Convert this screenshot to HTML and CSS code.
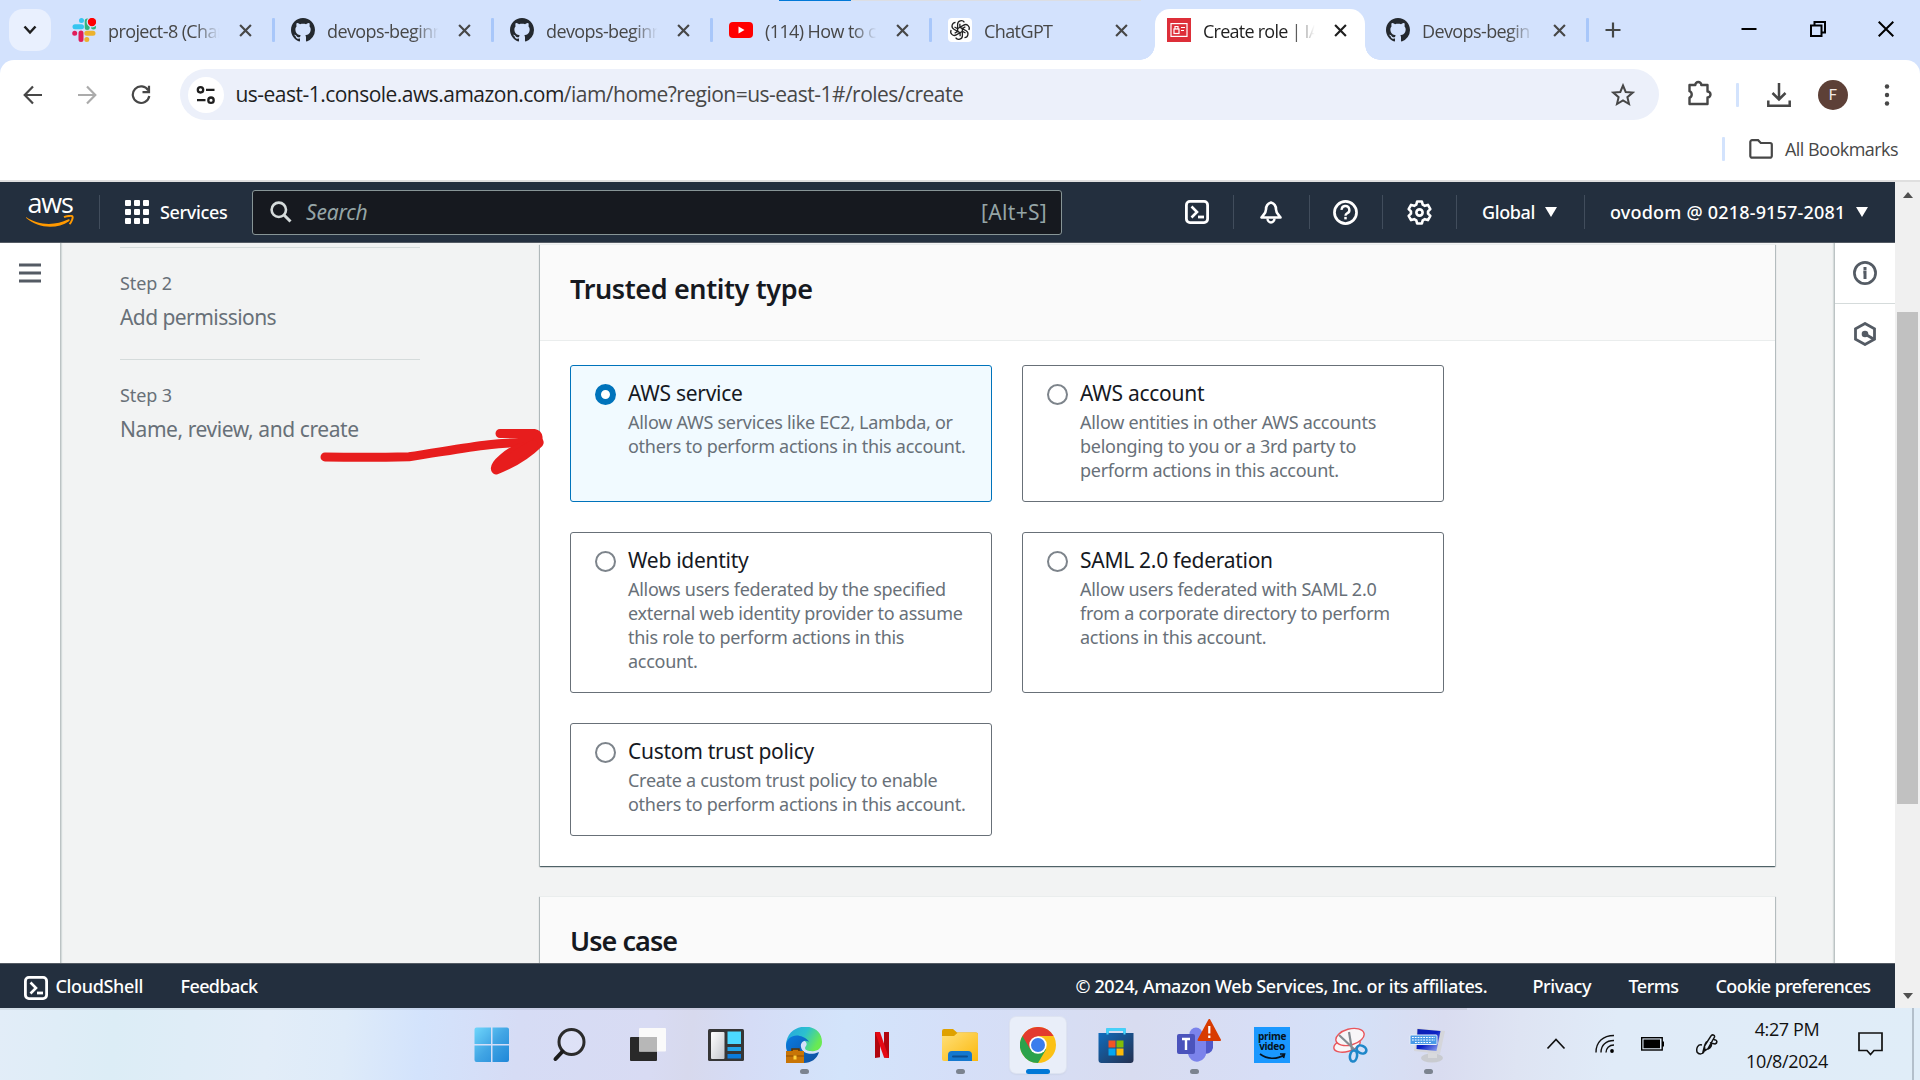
FILE: index.html
```html
<!DOCTYPE html>
<html lang="en">
<head>
<meta charset="utf-8">
<title>Create role | IAM</title>
<link rel="stylesheet" href="styles.css">
</head>
<body>
<svg class="defs" width="0" height="0">
  <defs>
    <symbol id="github" viewBox="0 0 16 16"><path fill="#24292f" d="M8 0C3.58 0 0 3.58 0 8c0 3.54 2.29 6.53 5.47 7.59.4.07.55-.17.55-.38 0-.19-.01-.82-.01-1.49-2.01.37-2.53-.49-2.69-.94-.09-.23-.48-.94-.82-1.13-.28-.15-.68-.52-.01-.53.63-.01 1.08.58 1.23.82.72 1.21 1.87.87 2.33.66.07-.52.28-.87.51-1.07-1.78-.2-3.64-.89-3.64-3.95 0-.87.31-1.59.82-2.15-.08-.2-.36-1.02.08-2.12 0 0 .67-.21 2.2.82.64-.18 1.32-.27 2-.27s1.36.09 2 .27c1.53-1.04 2.2-.82 2.2-.82.44 1.1.16 1.92.08 2.12.51.56.82 1.27.82 2.15 0 3.07-1.87 3.75-3.65 3.95.29.25.54.73.54 1.48 0 1.07-.01 1.93-.01 2.2 0 .21.15.46.55.38A8.01 8.01 0 0 0 16 8c0-4.42-3.58-8-8-8z"/></symbol>
    <symbol id="close" viewBox="0 0 12 12"><path d="M1 1l10 10M11 1L1 11" fill="none" stroke="currentColor" stroke-width="2"/></symbol>
    <symbol id="shell" viewBox="0 0 24 24"><rect x="1.4" y="1.4" width="21.2" height="21.2" rx="3.5" fill="none" stroke="#fff" stroke-width="2.8"/><path d="M6.5 6.500l5.500 5.500-5.500 5.500" fill="none" stroke="#fff" stroke-width="2.600"/><path d="M13 17h6" stroke="#fff" stroke-width="2.800"/></symbol>
    <linearGradient id="win" x1="0" y1="0" x2="1" y2="1"><stop offset="0" stop-color="#6fd6fb"/><stop offset=".5" stop-color="#41a5e4"/><stop offset="1" stop-color="#1f87d8"/></linearGradient>
    <linearGradient id="edgeTop" x1="0" y1="0" x2="1" y2=".4"><stop offset="0" stop-color="#25a4e0"/><stop offset=".55" stop-color="#2cc0cf"/><stop offset="1" stop-color="#69ea53"/></linearGradient>
    <linearGradient id="edgeBody" x1="0" y1="0" x2="1" y2="1"><stop offset="0" stop-color="#0a7be0"/><stop offset="1" stop-color="#0f4f9c"/></linearGradient>
    <linearGradient id="folder" x1="0" y1="0" x2="1" y2="1"><stop offset="0" stop-color="#ffe07a"/><stop offset="1" stop-color="#fbb80c"/></linearGradient>
    <linearGradient id="store" x1="0" y1="0" x2="1" y2="1"><stop offset="0" stop-color="#0f6cbd"/><stop offset="1" stop-color="#25304f"/></linearGradient>
    <linearGradient id="silver" x1="0" y1="0" x2="1" y2="1"><stop offset="0" stop-color="#fff"/><stop offset="1" stop-color="#c4c7cc"/></linearGradient>
    <linearGradient id="screen" x1="0" y1="0" x2="1" y2="1"><stop offset="0" stop-color="#0c1fb0"/><stop offset=".5" stop-color="#0a20c4"/><stop offset="1" stop-color="#9fb2f4"/></linearGradient>
  </defs>
</svg>

<header class="tabstrip">
  <button class="tab-search"><svg width="14" height="10" viewBox="0 0 14 10"><path d="M1.500 1.500L7 7.500l5.500-6" fill="none" stroke="#1f1f1f" stroke-width="2.500"/></svg></button>
  <div class="tab">
    <svg class="fav" viewBox="0 0 24 24"><g stroke-width="5" stroke-linecap="round"><path d="M9.500 2.500v0M3 8.800h6.500" stroke="#36c5f0"/><path d="M15.200 3v6.500M21.500 9v0" stroke="#2eb67d"/><path d="M14.800 15.200H21M14.800 21.500v0" stroke="#ecb22e"/><path d="M9 15v6.500M2.700 15.200v0" stroke="#e01e5a"/></g><circle cx="20" cy="4" r="4.800" fill="#f00" stroke="#d3e2fd" stroke-width="1.200"/></svg>
    <span class="tab-title">project-8 (Chan</span><svg class="x"><use href="#close"/></svg><i class="sep"></i>
  </div>
  <div class="tab"><svg class="fav"><use href="#github"/></svg><span class="tab-title">devops-beginn</span><svg class="x"><use href="#close"/></svg><i class="sep"></i></div>
  <div class="tab"><svg class="fav"><use href="#github"/></svg><span class="tab-title">devops-beginn</span><svg class="x"><use href="#close"/></svg><i class="sep"></i></div>
  <div class="tab"><svg class="fav" viewBox="0 0 24 24"><rect y="4" width="24" height="16" rx="4" fill="#f00"/><path d="M9.500 8.500v7l6-3.500z" fill="#fff"/></svg><span class="tab-title">(114) How to c</span><svg class="x"><use href="#close"/></svg><i class="sep"></i></div>
  <div class="tab"><svg class="fav" viewBox="0 0 24 24"><rect width="24" height="24" rx="4" fill="#fff"/><g fill="none" stroke="#222" stroke-width="1.300"><path id="petal" d="M12 9.300L9.600 10.700V6.300a3.700 3.700 0 0 1 6.800-2M9.600 10.700L6.500 9"/><use href="#petal" transform="rotate(60 12 12)"/><use href="#petal" transform="rotate(120 12 12)"/><use href="#petal" transform="rotate(180 12 12)"/><use href="#petal" transform="rotate(240 12 12)"/><use href="#petal" transform="rotate(300 12 12)"/></g></svg><span class="tab-title">ChatGPT</span><svg class="x"><use href="#close"/></svg></div>
  <div class="tab active"><svg class="fav" viewBox="0 0 24 24"><rect width="24" height="24" fill="#dd2f39"/><g fill="none" stroke="#fff" stroke-width="1.200"><rect x="4" y="5.600" width="16" height="12.800"/><rect x="7" y="11" width="5" height="4.500"/><path d="M8 11V8.500h3V11M14 9.500h4M14 12.500h3"/></g></svg><span class="tab-title">Create role | IA</span><svg class="x"><use href="#close"/></svg></div>
  <div class="tab"><svg class="fav"><use href="#github"/></svg><span class="tab-title">Devops-begin</span><svg class="x"><use href="#close"/></svg><i class="sep"></i></div>
  <svg class="newtab" width="16" height="16" viewBox="0 0 16 16"><path d="M8 .5v15M.5 8h15" stroke="#444746" stroke-width="2.200"/></svg>
  <div class="window-controls">
    <svg width="16" height="16"><path d="M.5 8h15" stroke="#000" stroke-width="2"/></svg>
    <svg width="16" height="16"><path d="M1 4.500h10.500V15H1zM4.500 4.500V1H15v10.500h-3.500" fill="none" stroke="#000" stroke-width="2"/></svg>
    <svg width="16" height="16"><path d="M.7.700l14.600 14.600M15.300.700L.7 15.300" stroke="#000" stroke-width="2"/></svg>
  </div>
  <div class="loader"></div>
</header>

<section class="toolbar">
  <svg class="nav-icon" viewBox="0 0 20 20"><path d="M19 10H2M10 1.500L1.700 10 10 18.500" fill="none" stroke="#474747" stroke-width="2.200"/></svg>
  <svg class="nav-icon" viewBox="0 0 20 20"><path d="M1 10h17M10 1.500l8.300 8.500-8.300 8.500" fill="none" stroke="#ababab" stroke-width="2.200"/></svg>
  <svg class="nav-icon" viewBox="0 0 20 20"><path d="M17.300 5.500A8.300 8.300 0 1 0 18.300 11M18 .8v6.400h-6.500" fill="none" stroke="#474747" stroke-width="2.200"/></svg>
  <div class="omnibox">
    <span class="site-info"><svg width="20" height="20"><g fill="none" stroke="#1f1f1f" stroke-width="2.300"><circle cx="4.500" cy="4.800" r="2.700"/><path d="M10 4.800h8.500M1 15.200h8.500"/><circle cx="15" cy="15.200" r="2.700"/></g></svg></span>
    <span class="url"><b>us-east-1.console.aws.amazon.com</b>/iam/home?region=us-east-1#/roles/create</span>
    <svg class="star" width="24" height="24" viewBox="0 0 24 24"><path d="M12 2.500l2.700 6.500 7 .6-5.300 4.600 1.600 6.800-6-3.600-6 3.600 1.600-6.800L2.300 9.600l7-.6z" fill="none" stroke="#474747" stroke-width="2"/></svg>
  </div>
  <svg class="puzzle" width="26" height="26" viewBox="0 0 26 26"><path d="M2.500 5h5.800a3 3 0 0 1 6 0h6.200v6.500a3 3 0 0 1 0 6V24h-18v-6.300a3.500 3.500 0 0 0 0-6.500z" fill="none" stroke="#474747" stroke-width="2.400" stroke-linejoin="round"/></svg>
  <i class="tool-sep"></i>
  <svg class="download" width="24" height="26" viewBox="0 0 24 26"><path d="M12 1v16M5.500 11l6.500 6.500 6.500-6.500M1.300 18.500v5.200h21.400v-5.200" fill="none" stroke="#474747" stroke-width="2.500"/></svg>
  <span class="avatar">F</span>
  <svg class="dots" width="6" height="22"><g fill="#474747"><circle cx="3" cy="2.500" r="2.200"/><circle cx="3" cy="11" r="2.200"/><circle cx="3" cy="19.500" r="2.200"/></g></svg>
</section>

<section class="bookmarks">
  <i class="tool-sep"></i>
  <svg width="24" height="20" viewBox="0 0 24 20"><path d="M1.300 3a1.800 1.800 0 0 1 1.800-1.800h6L11.800 4h9.300a1.700 1.700 0 0 1 1.700 1.700v11.200a1.800 1.800 0 0 1-1.800 1.800H3.100a1.800 1.800 0 0 1-1.800-1.800z" fill="none" stroke="#474747" stroke-width="2.200"/></svg>
  <span>All Bookmarks</span>
</section>

<div class="viewport">
  <div class="console">
    <nav class="aws-nav">
      <div class="logo"><span>aws</span><svg width="48" height="13" viewBox="0 0 48 13"><path d="M0 2c13 9 30 8.500 42 2.500 1.500-.7 2.500.7 1 1.700C31 14.500 12 13.500.2 3z" fill="#f90"/><path d="M38 2.200c3.500-1.600 8-1.600 8.500-.7.600 1-.6 5.200-3 7.600" fill="none" stroke="#f90" stroke-width="2"/></svg></div>
      <i class="nav-sep first"></i>
      <div class="services"><svg width="24" height="24"><g fill="#fff"><rect width="6" height="6" rx="1"/><rect x="9" width="6" height="6" rx="1"/><rect x="18" width="6" height="6" rx="1"/><rect y="9" width="6" height="6" rx="1"/><rect x="9" y="9" width="6" height="6" rx="1"/><rect x="18" y="9" width="6" height="6" rx="1"/><rect y="18" width="6" height="6" rx="1"/><rect x="9" y="18" width="6" height="6" rx="1"/><rect x="18" y="18" width="6" height="6" rx="1"/></g></svg><span>Services</span></div>
      <div class="search"><svg width="22" height="22"><circle cx="8.800" cy="8.800" r="7.200" fill="none" stroke="#d5dbdb" stroke-width="2.600"/><path d="M14 14l6.500 6.500" stroke="#d5dbdb" stroke-width="3"/></svg><em>Search</em><span>[Alt+S]</span></div>
      <div class="nav-right">
        <div class="cell c1"><svg width="24" height="24"><use href="#shell"/></svg></div>
        <div class="cell c2"><svg width="24" height="24" viewBox="0 0 24 24"><path d="M12 2.500c-3.500 1-5 3.500-5 7 0 3.500-2.500 5-4.500 8h19c-2-3-4.500-4.500-4.500-8 0-3.500-1.500-6-5-7z" fill="none" stroke="#fff" stroke-width="2.600" stroke-linejoin="round"/><path d="M8.500 18.500a3.500 4 0 0 0 7 0" fill="none" stroke="#fff" stroke-width="2.400"/></svg></div>
        <div class="cell c3"><svg width="25" height="25" viewBox="0 0 24 24"><circle cx="12" cy="12" r="10.600" fill="none" stroke="#fff" stroke-width="2.600"/><path d="M8.300 9.500a3.700 3.700 0 1 1 5.200 3.300c-1 .5-1.500 1-1.500 2.200" fill="none" stroke="#fff" stroke-width="2.300"/><rect x="10.800" y="16.200" width="2.400" height="2.400" fill="#fff"/></svg></div>
        <div class="cell c4"><svg width="25" height="25" viewBox="0 0 24 24"><path d="M9.700 1.500h4.600l.8 3 2 1.100 3-.9 2.300 4-2.200 2.200v2.200l2.200 2.200-2.300 4-3-.9-2 1.100-.8 3H9.700l-.8-3-2-1.100-3 .9-2.300-4 2.200-2.200v-2.200L1.600 8.700l2.300-4 3 .9 2-1.100z" fill="none" stroke="#fff" stroke-width="2.500" stroke-linejoin="round"/><circle cx="12" cy="12" r="3" fill="none" stroke="#fff" stroke-width="2.500"/></svg></div>
        <div class="cell c5"><span>Global</span><i class="caret"></i></div>
        <div class="cell c6"><span>ovodom @ 0218-9157-2081</span><i class="caret"></i></div>
      </div>
    </nav>

    <div class="body">
      <aside class="left-rail"><svg width="22" height="20"><path d="M0 2h22M0 10h22M0 18h22" stroke="#545b64" stroke-width="3"/></svg></aside>
      <ol class="steps">
        <li><small>Step 2</small><span class="permissions">Add permissions</span></li>
        <li><small>Step 3</small><span>Name, review, and create</span></li>
      </ol>
      <main class="content">
        <section class="panel">
          <h2>Trusted entity type</h2>
          <div class="tiles">
            <label class="tile selected"><i class="radio"></i><div><b>AWS service</b><p>Allow AWS services like EC2, Lambda, or<br>others to perform actions in this account.</p></div></label>
            <label class="tile"><i class="radio"></i><div><b>AWS account</b><p>Allow entities in other AWS accounts<br>belonging to you or a 3rd party to<br>perform actions in this account.</p></div></label>
            <label class="tile"><i class="radio"></i><div><b>Web identity</b><p>Allows users federated by the specified<br>external web identity provider to assume<br>this role to perform actions in this<br>account.</p></div></label>
            <label class="tile"><i class="radio"></i><div><b>SAML 2.0 federation</b><p>Allow users federated with SAML 2.0<br>from a corporate directory to perform<br>actions in this account.</p></div></label>
            <label class="tile"><i class="radio"></i><div><b>Custom trust policy</b><p>Create a custom trust policy to enable<br>others to perform actions in this account.</p></div></label>
          </div>
        </section>
        <section class="panel"><h2 class="use-case">Use case</h2></section>
      </main>
      <aside class="right-rail">
        <div class="info"><svg width="24" height="24"><circle cx="12" cy="12" r="10.600" fill="none" stroke="#545b64" stroke-width="2.700"/><path d="M10.300 11H12v7M12 6v3" fill="none" stroke="#545b64" stroke-width="3"/></svg></div>
        <div class="q"><svg width="24" height="24"><path d="M12 1.500l9.500 5.300v10.400L12 22.500l-9.500-5.300V6.800z" fill="none" stroke="#545b64" stroke-width="2.800"/><circle cx="12" cy="12" r="3.300" fill="#545b64"/><path d="M12 12l8.500 5" stroke="#545b64" stroke-width="2.800"/></svg></div>
      </aside>
    </div>

    <footer class="aws-footer">
      <svg width="24" height="24"><use href="#shell"/></svg>
      <span class="cloudshell">CloudShell</span>
      <span class="feedback">Feedback</span>
      <span class="copyright">© 2024, Amazon Web Services, Inc. or its affiliates.</span>
      <span class="privacy">Privacy</span>
      <span class="terms">Terms</span>
      <span class="cookies">Cookie preferences</span>
    </footer>
  </div>
  <div class="scrollbar"><i class="up"></i><i class="thumb"></i><i class="down"></i></div>
  <svg class="arrow" width="226" height="48" viewBox="0 0 226 48"><g fill="none" stroke="#e71d1d" stroke-width="9" stroke-linecap="round" stroke-linejoin="round"><path d="M6 29c28 .5 56 .5 84-.3 28-4 54-9 80-12 18-2 34-2.500 50-3"/><path d="M181 5.500h34c5 1 5 6 2 9l3 .5c-11 11-25 20-43 27-4-5 14-19 26-23"/><path d="M180 39l22-15 12-7" stroke-width="10"/></g></svg>
</div>

<footer class="taskbar">
  <div class="apps">
    <div class="app"><svg width="36" height="36"><path d="M.5 2.500a2 2 0 0 1 2-2H17V17H.500zM18.500.500H33a2 2 0 0 1 2 2V17H18.500zM.5 18.500H17V35H2.500a2 2 0 0 1-2-2zM18.500 18.500H35V33a2 2 0 0 1-2 2H18.500z" fill="url(#win)"/></svg></div>
    <div class="app"><svg width="36" height="36"><circle cx="19.500" cy="15" r="12.500" fill="#ffffff30" stroke="#2b2b2b" stroke-width="3"/><path d="M10.500 24.500L3.500 32" stroke="#1b1b1b" stroke-width="4" stroke-linecap="round"/></svg></div>
    <div class="app"><svg width="36" height="36"><rect y="10" width="27" height="24" rx="1" fill="#292929"/><rect x="9" y="1" width="27" height="23.500" rx="1" fill="#fafafa"/><path d="M9 10h18v14.500H9z" fill="#b7b7b7"/></svg></div>
    <div class="app"><svg width="36" height="36"><rect y="2" width="36" height="32" rx="1.500" fill="#363636"/><rect x="3" y="5" width="13.500" height="27" rx="1" fill="url(#silver)"/><path d="M19.500 4.500H33V17H19.500z" fill="#4cd9ff"/><path d="M19.500 20H33v4H19.500z" fill="#21a3e6"/><path d="M19.500 27H33v4.500H19.500z" fill="#0a7bdb"/></svg></div>
    <div class="app running"><svg width="36" height="36"><path d="M0 18C1-6 36-6 36 15c0 7-6 10-11 9-6 0-7-3-5-5 2-3-1-6-5-6C8 12 3 16 0 22z" fill="url(#edgeTop)"/><path d="M0 18C1 10 9 6 17 10c3 1 5 3 6 5-4-3-9 0-8 5 1 6 9 9 18 5C31 32 25 36 18 36 7 36 0 28 0 18z" fill="url(#edgeBody)"/><path d="M6 24v-1.500h8V24h4v12H0V24z" fill="#c87506"/><path d="M0 29h18" stroke="#8f4e00"/><path d="M6 24v-2h7v2" fill="none" stroke="#5b3300" stroke-width="1.500"/><rect x="7.500" y="28.500" width="3" height="4" fill="#ffd23b"/></svg></div>
    <div class="app"><svg width="36" height="36"><path d="M11 5h5v25.200l-5 .8zM20 5h5v26l-5-.6z" fill="#b1060f"/><path d="M11 5h5l9 26-5-.6z" fill="#e50914"/></svg></div>
    <div class="app running"><svg width="36" height="36"><path d="M0 4a2 2 0 0 1 2-2h9l4 3.500H34a2 2 0 0 1 2 2V14H0z" fill="#dfa100"/><path d="M0 9h12l4-3.500h18a2 2 0 0 1 2 2V34H2a2 2 0 0 1-2-2z" fill="url(#folder)"/><path d="M6 34v-6a4 4 0 0 1 4-4h16a4 4 0 0 1 4 4v6z" fill="#1478cf"/><path d="M11 29.500h14" stroke="#0c4f91" stroke-width="2" stroke-linecap="round"/></svg></div>
    <div class="app current"><svg width="36" height="36"><circle cx="18" cy="18" r="18" fill="#fbc116"/><path d="M18 18L2.400 9A18 18 0 0 0 18 36l8-13.500z" fill="#2ba24c"/><path d="M18 9h15.600A18 18 0 0 0 2.400 9l8 13.500z" fill="#e33b2e"/><circle cx="18" cy="18" r="8.700" fill="#fff"/><circle cx="18" cy="18" r="7" fill="#3b7ded"/></svg></div>
    <div class="app"><svg width="36" height="36"><path d="M9.500 8V2.500h17V8" fill="none" stroke="#24bff2" stroke-width="2.500"/><path d="M.5 6h35v27a3 3 0 0 1-3 3h-29a3 3 0 0 1-3-3z" fill="url(#store)"/><path d="M9.500 7.500v-5h17v5" fill="none" stroke="#42d4fb" stroke-width="2"/><path d="M10.500 13.500h7v7h-7z" fill="#f35325"/><path d="M18.500 13.500h7v7h-7z" fill="#81bc06"/><path d="M10.500 21.500h7v7h-7z" fill="#05a6f0"/><path d="M18.500 21.500h7v7h-7z" fill="#ffba08"/></svg></div>
    <div class="app running"><svg class="teams" width="46" height="44" viewBox="0 0 46 44"><circle cx="21" cy="15" r="6.500" fill="#7b83eb"/><path d="M28 18h10v11a7 7 0 0 1-10 5z" fill="#5059c9"/><path d="M12 18h19v14a9 9 0 0 1-18 3z" fill="#7b83eb"/><rect x="2" y="15" width="18" height="20" rx="2" fill="#4b53bc"/><path d="M7 20h8M11 20v11" stroke="#fff" stroke-width="2.400"/><path d="M34.300 1l10.700 20H23.500z" fill="#d83b01" stroke="#d83b01" stroke-width="2" stroke-linejoin="round"/><path d="M34.300 7v7.500M34.300 16.500v2.500" stroke="#fff" stroke-width="2.200"/></svg></div>
    <div class="app"><div class="prime"><span>prime</span><span>video</span><svg width="28" height="7"><path d="M1 1c8 6 18 5 24 1M21 1h4.500l-1 4" fill="none" stroke="#061320" stroke-width="1.700"/></svg></div></div>
    <div class="app"><svg width="36" height="36"><g fill="#f8f6f8" stroke="#e9555b" stroke-width="1.400"><ellipse cx="15" cy="18" rx="13.500" ry="6.500" transform="rotate(-15 15 18)"/><ellipse cx="18" cy="10" rx="14.500" ry="8" transform="rotate(-15 18 10)"/></g><path d="M7 8l16 15M17 5l3 18" stroke="#858b91" stroke-width="2.200"/><g fill="none" stroke="#1e87c9" stroke-width="2.600"><ellipse cx="29.500" cy="22.500" rx="5" ry="3.800" transform="rotate(25 29.500 22.500)"/><ellipse cx="21.500" cy="29" rx="3.500" ry="5.500" transform="rotate(10 21.500 29)"/></g></svg></div>
    <div class="app running"><svg width="38" height="36"><ellipse cx="23" cy="31" rx="11" ry="4.500" fill="#c9cbd0"/><path d="M19 24h9v7h-9z" fill="#d9dadd"/><path d="M8 1l28 3-5 23-26-3z" fill="#d5d6db"/><path d="M8.500 2l23 2-4 20-20-2z" fill="url(#screen)"/><rect x="1" y="8" width="27" height="9.500" rx="1" fill="#4a9be8" stroke="#e7eef8"/><path d="M3 10.500h23M3 13h23M6 15.500h16" stroke="#fff" stroke-width="1.200" stroke-dasharray="1.800 1"/></svg></div>
  </div>
  <div class="tray">
    <svg class="t-up" width="20" height="12"><path d="M1.500 10.500l8.500-9 8.500 9" fill="none" stroke="#111" stroke-width="1.700"/></svg>
    <svg class="t-wifi" width="20" height="20"><g fill="none" stroke="#111" stroke-width="1.400"><path d="M1 18.500C1 8 8 1.500 19 1.500M6 18.500C6 11 11 6.500 19 6.500M11 18.500c0-4 3-7.500 8-7.500"/></g><circle cx="17" cy="17" r="1.900"/></svg>
    <svg class="t-battery" width="23" height="14"><rect x=".7" y=".7" width="20.500" height="12.300" fill="none" stroke="#000" stroke-width="1.400"/><path d="M2.500 2.500h16.500v8.800H2.500zM21 4.500h2v5h-2z"/></svg>
    <svg class="t-pen" width="22" height="22"><path d="M7 19l1.500-6L15 3c1-2 4-1 3.500 1L12 15.500zM12 8C9 9 8 13 9 17M6 12c-4-1-6 3-5 7 2 3 6 2 7 0M12 16c3-1 4-4 3-6l4 1c3-1 2-5-1-4" fill="none" stroke="#111" stroke-width="1.500"/></svg>
    <div class="clock"><span>4:27 PM</span><span>10/8/2024</span></div>
    <svg class="t-note" width="25" height="24"><path d="M1 1h23v17.500h-8L12.500 22.500 9 18.500H1z" fill="none" stroke="#111" stroke-width="1.700"/></svg>
    <i class="show-desktop"></i>
  </div>
</footer>
</body>
</html>
```
FILE: styles.css
```css
* { box-sizing: border-box; }

body {
  margin: 0;
  width: 1920px;
  height: 1080px;
  overflow: hidden;
  display: flex;
  flex-direction: column;
  background: #fff;
  font-family: "Noto Sans", sans-serif;
}

svg { display: block; flex: none; }
.defs { position: absolute; }

/* browser tabs */
.tabstrip {
  position: relative;
  display: flex;
  align-items: flex-start;
  height: 75px;
  margin-bottom: -15px;
  flex: none;
  background: #d3e2fd;
  font-family: "Open Sans", sans-serif;
}
.tab-search {
  display: flex;
  align-items: center;
  justify-content: center;
  width: 42px;
  height: 42px;
  margin: 9px 6px 0 9px;
  padding: 0;
  border: 0;
  border-radius: 14px;
  background: #e9f0fe;
}
.tab {
  position: relative;
  display: flex;
  align-items: center;
  flex: none;
  width: 219px;
  height: 60px;
  padding: 0 0 0 15px;
  color: #474747;
}
.fav { width: 24px; height: 24px; }
.tab-title {
  width: 114px;
  margin-left: 12px;
  white-space: nowrap;
  font-size: 18px;
  line-height: 28px;
  letter-spacing: -0.6px;
  padding-top: 2px;
  mask-image: linear-gradient(90deg, #000 76%, transparent 98%);
}
.x { width: 13px; height: 13px; margin-left: 17px; }
.sep { width: 3px; height: 24px; margin-left: 20px; background: #a8c7fa; border-radius: 1px; }
.tab.active { color: #1f1f1f; isolation: isolate; }
.active .tab-title { letter-spacing: -0.75px; }
.tab.active::before {
  content: "";
  position: absolute;
  z-index: -1;
  left: 3px;
  top: 9px;
  width: 210px;
  height: 51px;
  border-radius: 15px 15px 0 0;
  background: #fff;
}
.tab.active::after {
  content: "";
  position: absolute;
  z-index: -1;
  left: -12px;
  top: 45px;
  width: 240px;
  height: 15px;
  background:
    radial-gradient(circle at 0 0, transparent 14.5px, #fff 15px) 0 0 / 15px 15px no-repeat,
    radial-gradient(circle at 15px 0, transparent 14.5px, #fff 15px) 225px 0 / 15px 15px no-repeat;
}
.newtab { margin: 22px 0 0 15px; }
.window-controls { display: flex; gap: 52.5px; margin: 21px 0 0 120px; }
.loader {
  position: absolute;
  top: 0;
  left: 779px;
  width: 362px;
  height: 1px;
  background: linear-gradient(90deg, #0078d7 72px, #dcdee3 72px);
}

/* address bar */
.toolbar {
  position: relative;
  display: flex;
  align-items: center;
  height: 70px;
  flex: none;
  padding-left: 23px;
  border-radius: 14px 14px 0 0;
  background: #fff;
  font-family: "Open Sans", sans-serif;
}
.nav-icon { width: 20px; height: 20px; margin-right: 34px; }
.omnibox {
  display: flex;
  align-items: center;
  width: 1479px;
  height: 51px;
  margin: -1px 0 0 -5px;
  padding-left: 8px;
  border-radius: 26px;
  background: #ecf0fa;
}
.site-info {
  display: flex;
  align-items: center;
  justify-content: center;
  width: 36px;
  height: 36px;
  border-radius: 50%;
  background: #fff;
}
.url {
  flex: 1;
  margin: -1px 0 0 11.500px;
  font-size: 21px;
  line-height: 32px;
  letter-spacing: -0.52px;
  color: #474747;
  white-space: nowrap;
}
.url b { font-weight: 400; color: #1f1f1f; }
.star { margin-right: 24px; }
.puzzle { margin: -4px 0 0 28px; }
.tool-sep { width: 3px; height: 24px; background: #d3e3fd; border-radius: 1px; }
.toolbar .tool-sep { margin-left: 23px; }
.download { margin-left: 28px; }
.avatar {
  width: 30px;
  height: 30px;
  margin-left: 27px;
  border-radius: 50%;
  background: #5d4037;
  color: #f2e9e6;
  font: 15px/30px Roboto, sans-serif;
  text-align: center;
}
.dots { margin-left: 36px; }

.bookmarks {
  display: flex;
  align-items: center;
  height: 52px;
  flex: none;
  padding-bottom: 12px;
  padding-left: 1722px;
  background: #fff;
  border-bottom: 2px solid #dfdfdf;
  font: 18px/24px "Open Sans", sans-serif;
  color: #474747;
}
.bookmarks svg { margin-left: 24px; }
.bookmarks span { margin-left: 12px; letter-spacing: -0.53px; white-space: nowrap; }

/* page area */
.viewport { position: relative; display: flex; height: 826px; flex: none; }
.console { display: flex; flex-direction: column; width: 1895px; }
.aws-nav {
  display: flex;
  align-items: center;
  height: 61px;
  flex: none;
  background: #232f3e;
  border-bottom: 1px solid #545b64;
  color: #fff;
  font-size: 18px;
  font-weight: 500;
}
.aws-nav span, .aws-nav em { margin-top: -1px; }
.logo {
  display: flex;
  flex-direction: column;
  align-items: center;
  width: 48px;
  margin: -2px 0 0 26px;
}
.logo span { font: 500 27px/19px "Open Sans", sans-serif; letter-spacing: -1.2px; height: 22px; }
.nav-sep { width: 1px; height: 34px; background: #414d5c; }
.nav-sep.first { margin-left: 25px; }
.services { display: flex; align-items: center; width: 152px; padding-left: 25px; gap: 11px; letter-spacing: -0.35px; }
.search {
  display: flex;
  align-items: center;
  width: 810px;
  height: 45px;
  padding: 0 14px 0 17px;
  border: 1px solid #879596;
  border-radius: 3px;
  background: #16191f;
  color: #95a5a6;
  font-size: 21px;
  font-weight: 400;
}
.search em { margin-left: 14px; flex: 1; letter-spacing: -0.2px; }
.search .em { margin: 0; }
.search span { letter-spacing: 0.3px; }
.nav-right { display: flex; align-items: center; margin-left: 98px; height: 34px; }
.cell { display: flex; align-items: center; justify-content: center; height: 34px; border-left: 1px solid #414d5c; }
.c1 { border-left: 0; width: 73px; }
.c2 { width: 76px; padding-right: 2px; }
.c3 { width: 73px; padding-right: 1px; }
.c4 { width: 74px; }
.c5 { width: 128px; padding-right: 2px; }
.c6 { width: 308px; justify-content: flex-start; padding-left: 25px; }
.c5 span { letter-spacing: -0.35px; }
.c6 span { letter-spacing: 0.2px; }
.caret { width: 0; height: 0; margin-left: 10px; border: 6.500px solid transparent; border-top: 10px solid #fff; border-bottom: 0; }

.body { display: flex; height: 720px; overflow: hidden; background: #f2f3f3; flex: none; }
.left-rail { width: 61px; padding: 20px 0 0 19px; background: #fff; border-right: 1px solid #bcc3c4; box-shadow: 1px 0 1px #d5dbdb; }
.steps { width: 300px; margin: 4px 120px 0 59px; padding: 0; list-style: none; color: #687078; flex: none; }
.steps li { display: flex; flex-direction: column; height: 112px; padding-top: 23px; border-top: 1px solid #d5dbdb; }
.steps small { font-size: 18px; line-height: 24px; letter-spacing: -0.1px; }
.steps span { margin-top: 10px; font-size: 21px; line-height: 24px; letter-spacing: -0.42px; white-space: nowrap; }
.steps .permissions { letter-spacing: -0.56px; }

.content { width: 1235px; flex: none; }
.panel {
  height: 622px;
  margin: 1px 0 30px;
  border-top: 1px solid #eaeded;
  background: #fff;
  box-shadow: 0 1px 1px rgba(0, 28, 36, .5), 1px 1px 1px rgba(0, 28, 36, .18), -1px 1px 1px rgba(0, 28, 36, .2);
}
.panel + .panel { margin-top: 0; }
.panel h2 {
  height: 96px;
  margin: 0;
  padding: 24px 30px;
  background: #fafafa;
  border-bottom: 1px solid #eaeded;
  font-size: 27px;
  line-height: 40px;
  font-weight: 600;
  letter-spacing: -0.38px;
  color: #16191f;
}
.panel h2.use-case { letter-spacing: -0.95px; }
.tiles { display: grid; grid-template-columns: 422px 422px; gap: 30px; padding: 24px 30px; }
.tile {
  display: flex;
  gap: 12px;
  padding: 11px 20px 19px 24px;
  border: 1px solid #687078;
  border-radius: 3px;
  background: #fff;
}
.tile b { display: block; font-size: 21px; font-weight: 400; line-height: 33px; letter-spacing: -0.28px; color: #16191f; }
.tile p { margin: 0; font-size: 18px; line-height: 24px; letter-spacing: -0.28px; color: #687078; white-space: nowrap; }
.radio { width: 21px; height: 21px; margin-top: 7px; border: 2px solid #7d848b; border-radius: 50%; background: #fff; flex: none; }
.tile.selected { border-color: #0073bb; background: #f1faff; }
.selected .radio { border: 6px solid #0073bb; }

.right-rail { width: 61px; margin-left: 59px; background: #fff; border-left: 1px solid #bcc3c4; box-shadow: -1px 0 1px #d5dbdb; flex: none; }
.right-rail div { display: flex; align-items: center; justify-content: center; height: 61px; }
.right-rail .info { border-bottom: 1px solid #d5dbdb; }
.right-rail .q { height: 60px; }

.aws-footer {
  display: flex;
  align-items: center;
  height: 45px;
  padding: 0 0 0 24px;
  background: #232f3e;
  border-top: 1px solid #545b64;
  color: #fff;
  font-size: 18px;
  font-weight: 500;
  white-space: nowrap;
  flex: none;
}
.aws-footer svg { margin-top: 3px; }
.cloudshell { margin-left: 7.500px; width: 88px; letter-spacing: -0.35px; }
.feedback { margin-left: 37px; width: 895px; letter-spacing: -0.6px; }
.copyright { width: 457px; letter-spacing: -0.37px; }
.privacy { width: 96px; letter-spacing: -0.44px; }
.terms { width: 87px; letter-spacing: -0.5px; }
.cookies { letter-spacing: -0.6px; }

.scrollbar { display: flex; flex-direction: column; align-items: center; width: 25px; padding: 10px 0 9px; background: #f0f0f0; }
.scrollbar .up, .scrollbar .down { width: 0; height: 0; border: 5.500px solid transparent; }
.scrollbar .up { border-top: 0; border-bottom: 6px solid #505050; }
.scrollbar .down { margin-top: auto; border-bottom: 0; border-top: 6px solid #505050; }
.scrollbar .thumb { width: 21px; height: 492px; margin-top: 114px; background: #c1c1c1; }

.arrow { position: absolute; left: 319px; top: 246px; }

/* desktop taskbar */
.taskbar {
  display: flex;
  height: 72px;
  flex: none;
  background: linear-gradient(95deg, #e2edf8 0, #dcedf6 6%, #e2edf8 14%, #deebf9 18%, #d3e3fc 22%, #d6dcf5 27%, #d8dbf3 34%, #d7d9ed 36%, #d5dcf6 39%, #d3e4fb 44%, #d5dff8 50%, #d8dcf0 59%, #d7def6 66%, #d4e1f8 70%, #d9dcf0 75%, #dee4f3 79%, #e0ebf8 84%, #e0edf8 100%);
  font-family: "Open Sans", sans-serif;
}
.apps { display: flex; padding-left: 453px; width: 1467px; flex: none; box-shadow: inset 0 2px 0 #00000010; }
.app { position: relative; display: flex; align-items: center; justify-content: center; width: 78px; height: 74px; flex: none; }
.app.running::after, .app.current::after {
  content: "";
  position: absolute;
  left: 35px;
  top: 61px;
  width: 9px;
  height: 5px;
  border-radius: 3px;
  background: #7b838f;
}
.app.current { width: 56px; height: 56px; margin: 9px 11px 0; border-radius: 6px; background: #e9eef9; box-shadow: 0 0 0 1px #dde3f1, 0 1px 2px #bcc4d6; }
.app.current::after { left: 16px; top: 52px; width: 24px; background: #0078d7; }
.teams { margin: -8px 0 0 8px; }
.prime { display: flex; flex-direction: column; align-items: center; width: 36px; height: 36px; padding-top: 4px; background: #1a98ff; color: #061320; font: 700 10px/10px "Open Sans", sans-serif; letter-spacing: -0.3px; }
.prime svg { margin: 2px 0 0 2px; }
.tray { display: flex; align-items: center; width: 453px; padding-left: 79px; }
.t-wifi { margin-left: 29px; }
.t-battery { margin-left: 26px; }
.t-pen { margin-left: 32px; }
.clock { display: flex; flex-direction: column; align-items: center; width: 90px; margin: 2px 0 0 24px; color: #111; font-size: 18px; line-height: 32px; letter-spacing: -0.38px; white-space: nowrap; }
.t-note { margin-left: 26px; }
.show-desktop { align-self: stretch; width: 2px; margin-left: 29px; background: #b3bfcb; }
```
